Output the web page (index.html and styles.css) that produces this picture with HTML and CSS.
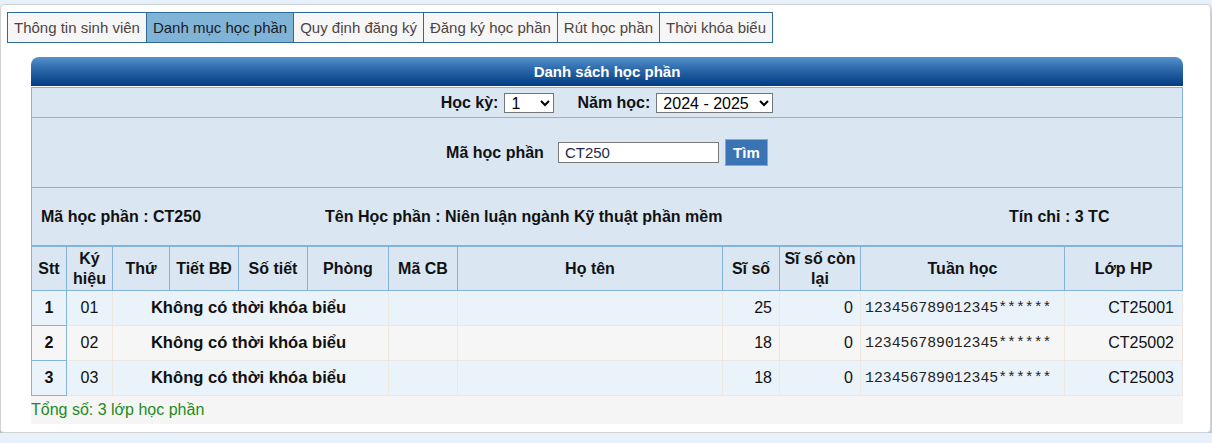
FILE: index.html
```html
<!DOCTYPE html>
<html lang="vi">
<head>
<meta charset="utf-8">
<title>Danh mục học phần</title>
<link rel="stylesheet" href="styles.css">
</head>
<body>
<div class="panel">
  <div class="tabs">
    <a class="tab first">Thông tin sinh viên</a>
    <a class="tab active">Danh mục học phần</a>
    <a class="tab">Quy định đăng ký</a>
    <a class="tab">Đăng ký học phần</a>
    <a class="tab">Rút học phần</a>
    <a class="tab">Thời khóa biểu</a>
  </div>

  <div class="box">
    <div class="box-title">Danh sách học phần</div>
    <div class="filters">
      <div class="frow term">
        <label class="lbl">Học kỳ:</label>
        <select class="sel sel-hk"><option>1</option><option>2</option><option>3</option></select>
        <label class="lbl lbl-nh">Năm học:</label>
        <select class="sel sel-nh"><option>2024 - 2025</option></select>
      </div>
      <div class="frow search">
        <label class="lbl">Mã học phần</label>
        <input class="inp" type="text" value="CT250">
        <button class="btn" type="button">Tìm</button>
      </div>
      <div class="frow info">
        <div>Mã học phần : CT250</div>
        <div>Tên Học phần : Niên luận ngành Kỹ thuật phần mềm</div>
        <div>Tín chỉ : 3 TC</div>
      </div>
    </div>

    <table class="grid">
      <colgroup>
        <col class="c-stt"><col class="c-kh"><col class="c-thu"><col class="c-tbd"><col class="c-st"><col class="c-ph"><col class="c-mcb"><col class="c-ht"><col class="c-ss"><col class="c-sscl"><col class="c-th"><col class="c-lhp">
      </colgroup>
      <thead>
        <tr>
          <th>Stt</th><th>Ký hiệu</th><th>Thứ</th><th>Tiết BĐ</th><th>Số tiết</th><th>Phòng</th><th>Mã CB</th><th>Họ tên</th><th>Sĩ số</th><th>Sĩ số còn lại</th><th>Tuần học</th><th>Lớp HP</th>
        </tr>
      </thead>
      <tbody>
        <tr class="odd">
          <td class="stt">1</td><td class="ctr">01</td><td class="none" colspan="4">Không có thời khóa biểu</td><td></td><td></td><td class="num">25</td><td class="num">0</td><td class="weeks">123456789012345******</td><td class="num lhp">CT25001</td>
        </tr>
        <tr class="even">
          <td class="stt">2</td><td class="ctr">02</td><td class="none" colspan="4">Không có thời khóa biểu</td><td></td><td></td><td class="num">18</td><td class="num">0</td><td class="weeks">123456789012345******</td><td class="num lhp">CT25002</td>
        </tr>
        <tr class="odd">
          <td class="stt">3</td><td class="ctr">03</td><td class="none" colspan="4">Không có thời khóa biểu</td><td></td><td></td><td class="num">18</td><td class="num">0</td><td class="weeks">123456789012345******</td><td class="num lhp">CT25003</td>
        </tr>
      </tbody>
    </table>
    <div class="total">Tổng số: 3 lớp học phần</div>
  </div>
</div>
</body>
</html>
```

FILE: styles.css
```css
html, body {
  margin: 0;
  padding: 0;
}
body {
  background: #e7f1fb;
  font-family: "Liberation Sans", Arial, sans-serif;
  color: #111;
}
.panel {
  margin: 4px 1px 0 0;
  background: #fff;
  border: 1px solid #cfd3d6;
  border-radius: 4px;
  box-shadow: 0 4px 5px rgba(0, 0, 0, 0.35);
  padding: 7px 0 8px 6px;
}

/* tabs */
.tabs {
  display: flex;
}
.tab {
  display: block;
  height: 29px;
  line-height: 29px;
  padding: 0 6px;
  border: 1px solid #2e6b9a;
  margin-left: -1px;
  background: #f6f6f6;
  color: #4e4444;
  font-size: 15px;
  white-space: nowrap;
}
.tab.first {
  margin-left: 0;
}
.tab.active {
  background: #80b4d7;
  color: #1a1a24;
}

/* box */
.box {
  width: 1152px;
  margin: 14px 0 0 24px;
}
.box-title {
  height: 29px;
  line-height: 29px;
  border-radius: 8px 8px 0 0;
  background: linear-gradient(to bottom, #5592cd 0%, #2a66a8 45%, #023b82 100%);
  color: #fff;
  font-weight: bold;
  font-size: 15px;
  text-align: center;
  margin-bottom: 1px;
}
.filters {
  border: 1px solid #84b4dc;
  background: #dae7f3;
}
.frow {
  display: flex;
  align-items: center;
  justify-content: center;
}
.frow + .frow {
  border-top: 1px solid #84b4dc;
}
.lbl {
  font-weight: bold;
  font-size: 16px;
}
.term {
  height: 29px;
}
.sel {
  font-family: "Liberation Sans", Arial, sans-serif;
  font-size: 16px;
  height: 20px;
  padding: 0 0 0 2px;
  margin: 0 0 0 6px;
  border: 1px solid #767676;
  border-radius: 0;
  background: #fff;
  color: #000;
}
.sel-hk {
  width: 50px;
}
.sel-nh {
  width: 117px;
}
.lbl-nh {
  margin-left: 23px;
}
.search {
  height: 69px;
}
.inp {
  width: 161px;
  height: 21px;
  box-sizing: border-box;
  margin: 0 0 0 14px;
  padding: 0 6px;
  border: 1px solid #7a7a7a;
  font-family: "Liberation Sans", Arial, sans-serif;
  font-size: 15px;
  color: #1c2b4a;
  background: #fff;
}
.btn {
  width: 43px;
  height: 27px;
  margin: 0 0 0 6px;
  padding: 0;
  border: 1px solid #7eaad6;
  background: #3b74b5;
  color: #fff;
  font-family: "Liberation Sans", Arial, sans-serif;
  font-weight: bold;
  font-size: 15px;
}
.info {
  height: 57px;
  display: grid;
  grid-template-columns: 284px 684px 1fr;
  align-items: center;
  padding-left: 9px;
  font-weight: bold;
  font-size: 16px;
}

/* grid table */
.grid {
  width: 1152px;
  table-layout: fixed;
  border-collapse: collapse;
  border-top: 1px solid #84b4dc;
  font-size: 16px;
}
.c-stt { width: 35px; }
.c-kh { width: 46px; }
.c-thu { width: 57px; }
.c-tbd { width: 69px; }
.c-st { width: 69px; }
.c-ph { width: 81px; }
.c-mcb { width: 69px; }
.c-ht { width: 265px; }
.c-ss { width: 57px; }
.c-sscl { width: 81px; }
.c-th { width: 204px; }
.c-lhp { width: 118px; }

.grid th {
  height: 43px;
  padding: 0 2px;
  background: #dae7f3;
  border: 1px solid #84b4dc;
  font-weight: bold;
  line-height: 20px;
  text-align: center;
  vertical-align: middle;
}
.grid td {
  height: 34px;
  padding: 0 8px;
  border: 1px solid #ece8df;
  vertical-align: middle;
}
.grid tr.odd td {
  background: #eaf2fa;
}
.grid tr.even td {
  background: #f6f6f6;
}
.grid td.stt {
  background: #dae7f3;
  border: 1px solid #84b4dc;
  font-weight: bold;
  text-align: center;
  padding: 0;
}
.grid td.ctr {
  text-align: center;
  padding: 0;
}
.grid td.none {
  text-align: center;
  font-weight: bold;
  font-size: 16.6px;
  padding: 0 4px 0 0;
}
.grid td.num {
  text-align: right;
  padding-right: 7px;
}
.grid td.lhp {
  padding-right: 8px;
}
.grid td.weeks {
  font-family: "Liberation Mono", "Courier New", monospace;
  font-size: 14.8px;
  padding: 0 0 0 4px;
  white-space: nowrap;
  color: #222;
}
.total {
  height: 28px;
  line-height: 28px;
  background: #f5f5f5;
  color: #1c8c22;
  font-size: 16px;
}
```
